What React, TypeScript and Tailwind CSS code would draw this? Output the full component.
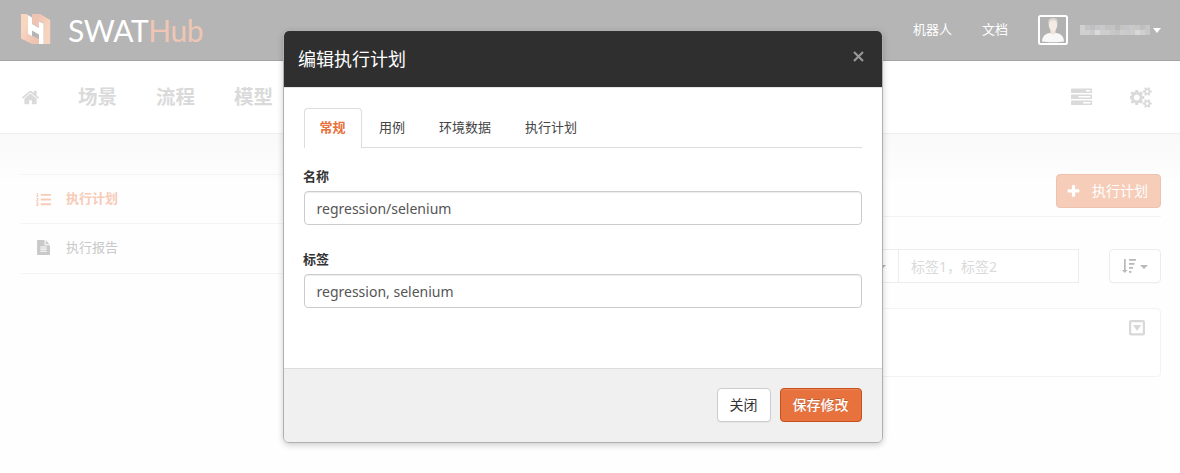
import type { ReactNode } from "react";
import { FaListOl } from "react-icons/fa";

const HOME =
  "M1472 992v480q0 26-19 45t-45 19h-384v-384h-256v384h-384q-26 0-45-19t-19-45v-480q0-1 .5-3t.5-3l575-474 575 474q1 2 1 6zm223-69l-62 74q-8 9-21 11h-3q-13 0-21-7l-692-577-692 577q-12 8-24 7-13-2-21-11l-62-74q-8-10-7-23.5t11-21.5l719-599q32-26 76-26t76 26l244 204v-195q0-14 9-23t23-9h192q14 0 23 9t9 23v408l219 182q10 8 11 21.5t-7 23.5z";
const TASKS =
  "M1024 1408h640v-128h-640v128zm-384-512h1024v-128h-1024v128zm640-512h384v-128h-384v128zm512 832v256q0 26-19 45t-45 19h-1664q-26 0-45-19t-19-45v-256q0-26 19-45t45-19h1664q26 0 45 19t19 45zm0-512v256q0 26-19 45t-45 19h-1664q-26 0-45-19t-19-45v-256q0-26 19-45t45-19h1664q26 0 45 19t19 45zm0-512v256q0 26-19 45t-45 19h-1664q-26 0-45-19t-19-45v-256q0-26 19-45t45-19h1664q26 0 45 19t19 45z";
const PLUS =
  "M1600 736v192q0 40-28 68t-68 28h-416v416q0 40-28 68t-68 28h-192q-40 0-68-28t-28-68v-416h-416q-40 0-68-28t-28-68v-192q0-40 28-68t68-28h416v-416q0-40 28-68t68-28h192q40 0 68 28t28 68v416h416q40 0 68 28t28 68z";
const FILE_TEXT =
  "M1596 476q14 14 28 36h-472v-472q22 14 36 28zm-476 164h544v1056q0 40-28 68t-68 28h-1344q-40 0-68-28t-28-68v-1600q0-40 28-68t68-28h800v544q0 40 28 68t68 28zm160 736v-64q0-14-9-23t-23-9h-704q-14 0-23 9t-9 23v64q0 14 9 23t23 9h704q14 0 23-9t9-23zm0-256v-64q0-14-9-23t-23-9h-704q-14 0-23 9t-9 23v64q0 14 9 23t23 9h704q14 0 23-9t9-23zm0-256v-64q0-14-9-23t-23-9h-704q-14 0-23 9t-9 23v64q0 14 9 23t23 9h704q14 0 23-9t9-23z";
const COGS =
  "M832 896q0-106-75-181t-181-75-181 75-75 181 75 181 181 75 181-75 75-181zm768 512q0-52-38-90t-90-38-90 38-38 90q0 53 37.5 90.5t90.5 37.5 90.5-37.5 37.5-90.5zm0-1024q0-52-38-90t-90-38-90 38-38 90q0 53 37.5 90.5t90.5 37.5 90.5-37.5 37.5-90.5zm-384 421v185q0 10-7 19.5t-16 10.5l-155 24q-11 35-32 76 34 48 90 115 7 11 7 20 0 12-7 19-23 30-82.5 89.5t-78.5 59.5q-11 0-21-7l-115-90q-37 19-77 31-11 108-23 155-7 24-30 24h-186q-11 0-20-7.5t-10-17.5l-23-153q-34-10-75-31l-118 89q-7 7-20 7-11 0-21-8-144-133-144-160 0-9 7-19 10-14 41-53t47-61q-23-44-35-82l-152-24q-10-1-17-9.5t-7-19.5v-185q0-10 7-19.5t16-10.5l155-24q11-35 32-76-34-48-90-115-7-11-7-20 0-12 7-20 22-30 82-89t79-59q11 0 21 7l115 90q34-18 77-32 11-108 23-154 7-24 30-24h186q11 0 20 7.5t10 17.5l23 153q34 10 75 31l118-89q8-7 20-7 11 0 21 8 144 133 144 160 0 8-7 19-12 16-42 54t-45 60q23 48 34 82l152 23q10 2 17 10.5t7 19.5zm640 533v140q0 16-149 31-12 27-30 52 51 113 51 138 0 4-4 7-122 71-124 71-8 0-46-47t-52-68q-20 2-30 2t-30-2q-14 21-52 68t-46 47q-2 0-124-71-4-3-4-7 0-25 51-138-18-25-30-52-149-15-149-31v-140q0-16 149-31 13-29 30-52-51-113-51-138 0-4 4-7 4-2 35-20t59-34 30-16q8 0 46 46.5t52 67.5q20-2 30-2t30 2q51-71 92-112l6-2q4 0 124 70 4 3 4 7 0 25-51 138 17 23 30 52 149 15 149 31zm0-1024v140q0 16-149 31-12 27-30 52 51 113 51 138 0 4-4 7-122 71-124 71-8 0-46-47t-52-68q-20 2-30 2t-30-2q-14 21-52 68t-46 47q-2 0-124-71-4-3-4-7 0-25 51-138-18-25-30-52-149-15-149-31v-140q0-16 149-31 13-29 30-52-51-113-51-138 0-4 4-7 4-2 35-20t59-34 30-16q8 0 46 46.5t52 67.5q20-2 30-2t30 2q51-71 92-112l6-2q4 0 124 70 4 3 4 7 0 25-51 138 17 23 30 52 149 15 149 31z";

function Glyph({ d, box = "0 0 1792 1792", className }: { d: string; box?: string; className: string }) {
  return (
    <svg viewBox={box} fill="currentColor" className={`block shrink-0 ${className}`}>
      <path d={d} />
    </svg>
  );
}

function Caret({ className }: { className: string }) {
  return (
    <svg viewBox="0 0 8 4" preserveAspectRatio="none" fill="currentColor" className={`block w-2 shrink-0 ${className}`}>
      <path d="M0 0h8L4 4z" />
    </svg>
  );
}

function LogoMark() {
  return (
    <svg viewBox="0 0 30 31" className="block h-[31px] w-[30px] shrink-0">
      <defs>
        <linearGradient id="logo-left" x1="0" y1="0" x2="1" y2="1">
          <stop offset="0.3" stopColor="#f8d6c0" />
          <stop offset="0.8" stopColor="#efc3b2" />
        </linearGradient>
        <linearGradient id="logo-right" x1="0" y1="0" x2="1" y2="0.6">
          <stop offset="0.3" stopColor="#efc3b2" />
          <stop offset="0.8" stopColor="#f6d3bd" />
        </linearGradient>
      </defs>
      <path d="M0 0h5l2 1v19l11 5v5h-7L0 24.500z" fill="url(#logo-left)" />
      <path d="M11 0h8l10.200 6v24H22.500V9L18 7v6.500L11 9.500z" fill="url(#logo-right)" />
      <path d="M5 0l6 3.500v6.500l7 4V7.500l4.500 2V30H18V20.500l-7-4V22L7 20V1z" fill="#fff" />
    </svg>
  );
}

function Avatar() {
  return (
    <svg viewBox="0 0 30 30" className="block size-[30px] shrink-0">
      <rect x="1" y="1" width="28" height="28" rx="1.500" fill="#b2b2b2" stroke="#fff" strokeWidth="2" />
      <path d="M4 26.500c0-5 3.500-8 8-8.500h6c4.500.500 8 3.500 8 8.500-6 1-16 1-22 0z" fill="#f8f8f8" />
      <path d="M12.500 13h5v5.500q-2.500 2-5 0z" fill="#efe5df" />
      <ellipse cx="15" cy="10" rx="4.300" ry="6" fill="#f5ebe5" />
      <path d="M10.500 9C9.500 5 11.500 3 15 3s5.500 2 4.500 6c-.5-2-.8-3-1.800-3.500h-5.400c-1 .5-1.300 1.500-1.800 3.500z" fill="#ddd4cc" />
    </svg>
  );
}

const MOSAIC = [
  ["#d0d0d3", "#c4c4c4", "#bfbfc0", "#c6c6c8", "#c9c9cb", "#c2c2c3", "#c3c3c3", "#b9b9ba", "#c4c4c3", "#c4c6cb", "#c9c9c6", "#c6c6c5", "#bebec0", "#c6c6c5"],
  ["#d0d0d3", "#cfcfd1", "#c9c9ca", "#dadadb", "#cecece", "#cdcccf", "#c8c8c8", "#c4c4c4", "#cdcdce", "#cacac7", "#cbcbcd", "#d8d8d8", "#d0d0d0", "#c8c8c9"],
];

function MaskedName() {
  return (
    <svg viewBox="0 0 70 10" shapeRendering="crispEdges" className="block h-2.5 w-[70px] shrink-0">
      {MOSAIC.map((row, y) =>
        row.map((c, x) => <rect key={`${x}-${y}`} x={x * 5} y={y * 5} width="5" height="5" fill={c} />),
      )}
    </svg>
  );
}

function TopBar() {
  return (
    <header className="flex h-[61px] items-start border-b border-[#a3a3a3] bg-[#b5b5b5] pr-[19px] pl-[21px] text-white">
      <div className="pt-3.5">
        <LogoMark />
      </div>
      <div className="ml-[17px] pt-[11px] font-['Lato',sans-serif] text-[30px] leading-[38px] tracking-[-0.4px]">
        SWAT<span className="text-[#f0c5b4]">Hub</span>
      </div>
      <div className="ml-auto flex h-[60px] items-center text-[13px]">
        <span>机器人</span>
        <span className="ml-[30px]">文档</span>
        <span className="ml-[30px]">
          <Avatar />
        </span>
        <span className="ml-3">
          <MaskedName />
        </span>
        <Caret className="ml-[3px] h-[5px]" />
      </div>
    </header>
  );
}

function NavBar() {
  return (
    <nav className="flex h-[73px] items-center border-b border-[#efefef] bg-white pr-[27.500px] pl-[21px] text-[19.500px] font-bold text-[#dadada]">
      <Glyph d={HOME} className="size-[19px]" />
      <span className="ml-[38px]">场景</span>
      <span className="ml-[39px]">流程</span>
      <span className="ml-[39px]">模型</span>
      <Glyph d={TASKS} className="ml-auto size-[21px]" />
      <Glyph d={COGS} box="0 0 1920 1792" className="ml-[38px] h-[21px] w-[22.500px]" />
    </nav>
  );
}

function SideItem({ icon, children, className }: { icon: ReactNode; children: ReactNode; className: string }) {
  return (
    <li className={`flex items-center border-b border-[#f4f4f4] pl-[15px] text-[13px] ${className}`}>
      <span className="flex w-[30px]">{icon}</span>
      {children}
    </li>
  );
}

function Workspace() {
  return (
    <main className="flex h-[339px] bg-[#fefefe] bg-[linear-gradient(#f9f9f9,#fdfdfd_44px,#fefefe_45px)] pr-[19px] pl-[21px] pt-10">
      <ul className="h-[100px] w-[272px] border-t border-[#f4f4f4]">
        <SideItem icon={<FaListOl className="size-[15px]" />} className="h-[49px] font-bold text-[#f7cbb8]">
          执行计划
        </SideItem>
        <SideItem icon={<Glyph d={FILE_TEXT} className="size-[15px]" />} className="h-[50px] pb-0.5 text-[#c9c9c9]">
          执行报告
        </SideItem>
      </ul>
      <section className="ml-5 flex-1">
        <div className="flex h-[43px] justify-end border-b border-[#f3f3f3]">
          <button className="flex h-[34px] w-[105px] items-center rounded border border-[#edc2ae] bg-[#f5cdb9] pl-[9px] text-sm text-white">
            <Glyph d={PLUS} className="size-[15px]" />
            <span className="ml-[11px]">执行计划</span>
          </button>
        </div>
        <div className="mt-8 flex h-[34px] justify-end">
          <div className="flex w-[120px] items-center justify-end border border-r-0 border-[#ececec] bg-white pt-0.5 pr-3 text-[#b0b0b0]">
            <Caret className="h-1" />
          </div>
          <div className="flex w-[181px] items-center border border-[#ececec] bg-white pt-0.5 pl-3 text-sm text-[#dadada]">
            标签1，标签2
          </div>
          <button className="ml-[30px] flex w-[52px] items-center rounded border border-[#ececec] bg-white pl-3 text-[#b8b8b8] shadow-[0_1px_1px_rgba(0,0,0,0.02)]">
            <svg viewBox="0 0 14 14" fill="currentColor" className="block size-3.5">
              <path d="M2 0h1.700v11h1.800L2.800 14 0 11h2zM7 0h7v1.700H7zM7 4h5.500v1.700H7zM7 8h4v1.700H7zM7 12h2.400v1.700H7z" />
            </svg>
            <Caret className="mt-0.5 ml-1 h-1" />
          </button>
        </div>
        <div className="mt-[25px] flex h-[69px] justify-end rounded border border-[#f3f3f3] bg-white pt-[11px] pr-[15px]">
          <svg viewBox="0 0 16 16" className="block size-4 text-[#d8d8d8]">
            <rect x="1.100" y="1.100" width="13.800" height="13.300" rx="1" fill="none" stroke="currentColor" strokeWidth="2.200" />
            <path d="M4 5h8.200L8.100 11z" fill="currentColor" />
          </svg>
        </div>
      </section>
    </main>
  );
}

function Field({ label, value, className }: { label: string; value: string; className: string }) {
  return (
    <label className={`block ${className}`}>
      <span className="-ml-px block h-5 text-[13px] leading-5 font-bold text-[#333]">{label}</span>
      <input
        type="text"
        defaultValue={value}
        className="mt-[5px] block h-[34px] w-full rounded border border-[#ccc] bg-white px-[11.500px] text-sm text-[#555] shadow-[inset_0_1px_1px_rgba(0,0,0,0.075)] outline-none"
      />
    </label>
  );
}

function EditPlanDialog() {
  return (
    <div
      role="dialog"
      className="absolute top-[30px] left-[283px] flex h-[413px] w-[600px] flex-col overflow-hidden rounded-md border border-[#b0b0b0] bg-white shadow-[0_2px_6px_rgba(0,0,0,0.2)]"
    >
      <div className="flex h-[57px] shrink-0 items-center justify-between border-b border-[#e5e5e5] bg-[#2f2f2f] pr-[18px] pb-px pl-3.5 text-lg text-white">
        <h3>编辑执行计划</h3>
        <button aria-label="Close" className="mb-1">
          <svg viewBox="0 0 11 11" className="block size-[11px]" stroke="#979797" strokeWidth="2.200">
            <path d="M1 1l9 9M10 1l-9 9" />
          </svg>
        </button>
      </div>
      <div className="flex-1 px-5 pt-5">
        <div className="flex h-10 gap-0.5 border-b border-[#ddd] text-[13px] text-[#444]">
          <span className="-mb-px flex h-10 w-[58px] items-center rounded-t border border-b-0 border-[#ddd] bg-white pb-0.5 pl-[14.500px] font-bold text-[#e7723d]">
            常规
          </span>
          <span className="flex w-[58px] items-center pl-[15px]">用例</span>
          <span className="flex w-[84px] items-center pl-[15px]">环境数据</span>
          <span className="flex w-[84px] items-center pl-[15px]">执行计划</span>
        </div>
        <Field label="名称" value="regression/selenium" className="mt-[18px]" />
        <Field label="标签" value="regression, selenium" className="mt-6" />
      </div>
      <div className="flex h-[74px] shrink-0 justify-end gap-[9px] border-t border-[#ddd] bg-[#f0f0f0] pt-[19px] pr-5 text-sm">
        <button className="h-[34px] w-[54px] rounded border border-[#ccc] bg-white pr-px text-[#333] shadow-[0_1px_1px_rgba(0,0,0,0.05)]">
          关闭
        </button>
        <button className="h-[34px] w-[82px] rounded border border-[#c8501d] bg-[#e7723d] pr-px font-medium text-white shadow-[inset_0_1px_0_rgba(255,255,255,0.15)] [text-shadow:0_-1px_0_rgba(0,0,0,0.2)]">
          保存修改
        </button>
      </div>
    </div>
  );
}

export default function App() {
  return (
    <div className="relative h-[473px] w-[1180px] overflow-hidden bg-[#fefefe] font-['Noto_Sans','Noto_Sans_CJK_SC',sans-serif]">
      <TopBar />
      <NavBar />
      <Workspace />
      <EditPlanDialog />
    </div>
  );
}
